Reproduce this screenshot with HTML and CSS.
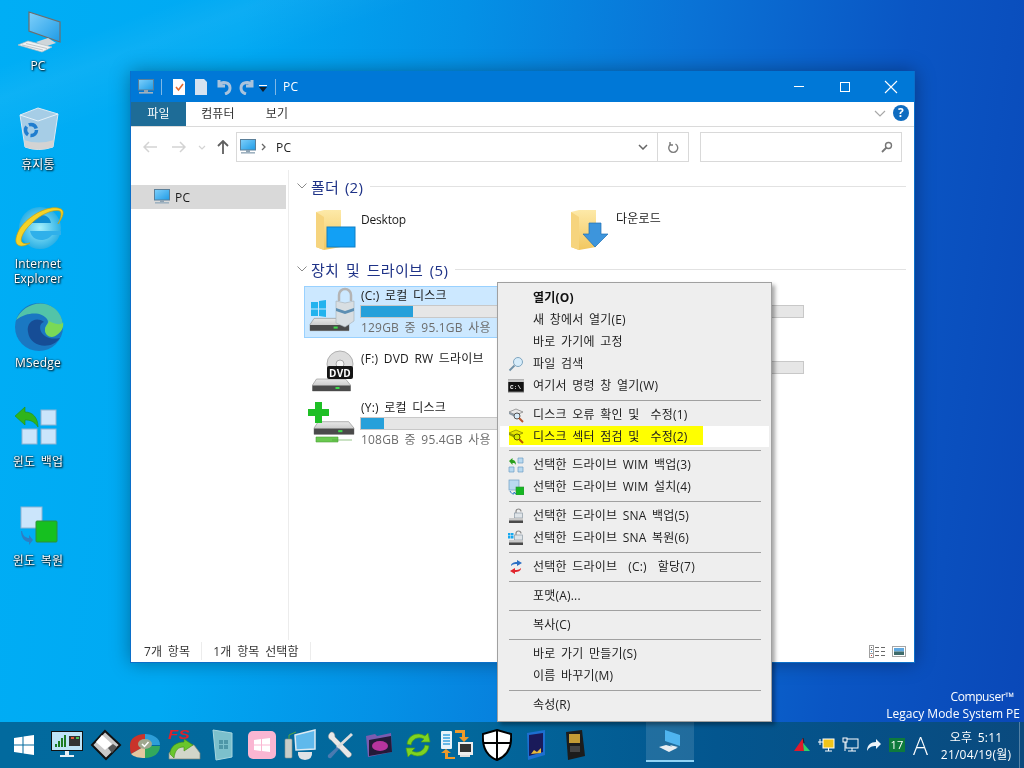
FILE: index.html
```html
<!DOCTYPE html>
<html lang="ko">
<head>
  <meta charset="UTF-8">
  <title>PC</title>
  <link rel="stylesheet" href="styles.css">
</head>
<body>
  <svg class="defs" width="0" height="0">
    <defs>
      <linearGradient id="screen" x1="0" y1="0" x2="1" y2="1">
        <stop offset="0" stop-color="#7fd0fb"/><stop offset="1" stop-color="#1e9be6"/>
      </linearGradient>
      <linearGradient id="folder" x1="0" y1="0" x2="0" y2="1">
        <stop offset="0" stop-color="#fde9a8"/><stop offset="1" stop-color="#f2c75f"/>
      </linearGradient>
      <linearGradient id="diskbody" x1="0" y1="0" x2="0" y2="1">
        <stop offset="0" stop-color="#e8e8e8"/><stop offset="1" stop-color="#b5b5b5"/>
      </linearGradient>
      <radialGradient id="iefill" cx=".5" cy=".5" r=".55">
        <stop offset="0" stop-color="#a5f0fc"/><stop offset="1" stop-color="#1fa9e2"/>
      </radialGradient>
      <symbol id="pc" viewBox="0 0 16 16">
        <rect x="0.5" y="0.5" width="15" height="10.5" fill="url(#screen)" stroke="#5b7f99"/>
        <rect x="6" y="11" width="4" height="2" fill="#8fa3b3"/>
        <rect x="1" y="13" width="14" height="1.6" fill="#9fb2c0"/>
      </symbol>
      <symbol id="drive" viewBox="0 0 40 14">
        <path d="M1 7 5 1H34L39 7V13H1Z" fill="url(#diskbody)" stroke="#8a8a8a" stroke-width=".6"/>
        <rect x="1" y="7.5" width="38" height="5.5" fill="#4a4a4a"/>
        <rect x="24" y="9" width="4" height="2" fill="#3fdc4b"/>
      </symbol>
      <symbol id="checkdisk" viewBox="0 0 16 16">
        <path d="M1 5 8 2 15 5 8 8Z" fill="#e7e7e7" stroke="#7b7b7b" stroke-width=".7"/>
        <path d="M1 5V7L6 9.5 8 8Z" fill="#8d9aa5"/>
        <circle cx="9" cy="9" r="3" fill="#d7ecfa" stroke="#555"/>
        <path d="M11 11 15 15" stroke="#b8562c" stroke-width="2"/>
      </symbol>
      <symbol id="lockdrive" viewBox="0 0 16 16">
        <path d="M8 5V3.5A2.5 2.5 0 0 1 13 3.5" fill="none" stroke="#8c8c8c" stroke-width="1.2"/>
        <rect x="6.5" y="5" width="8" height="5" fill="#dfe4e8" stroke="#8c9aa6" stroke-width=".7"/>
        <path d="M1 10H15V15H1Z" fill="#c8c8c8"/>
        <rect x="1" y="12.5" width="14" height="2.5" fill="#4a4a4a"/>
      </symbol>
    </defs>
  </svg>

  <div class="desktop">
    <div class="ray"></div>

    <div class="dicon dicon-pc">
      <svg width="76" height="50" viewBox="0 0 76 50">
        <path d="M29 4 60 14V34L29 23Z" fill="url(#screen)" stroke="#6d6d6d" stroke-width="1.2"/>
        <path d="M36 34 48 30 56 35 44 39Z" fill="#cfd6da"/>
        <path d="M18 37 28 33 52 39 42 44Z" fill="#eef2f4" stroke="#b5bcc0" stroke-width=".7"/>
        <path d="M22 37 43 42M26 35.500 47 40.500" stroke="#aab2b6" stroke-width=".7"/>
      </svg>
      <span class="dlabel">PC</span>
    </div>
    <div class="dicon dicon-bin">
      <svg width="76" height="46" viewBox="0 0 76 46">
        <path d="M20 8 38 1 58 7 53 40Q38 45 25 40Z" fill="#a6cde6" stroke="#dbeaf4" stroke-width="1"/>
        <path d="M20 8 38 14 58 7" fill="none" stroke="#e4f1f9" stroke-width="1"/>
        <path d="M24 33Q38 38 54 33L53 40Q38 45 25 40Z" fill="#d3d3d3"/>
        <circle cx="31" cy="23" r="5.500" fill="none" stroke="#1f7dcf" stroke-width="3.500" stroke-dasharray="9 2.500"/>
      </svg>
      <span class="dlabel">휴지통</span>
    </div>
    <div class="dicon dicon-ie">
      <svg width="76" height="50" viewBox="0 0 76 50">
        <circle cx="40" cy="25" r="21" fill="url(#iefill)"/>
        <path d="M30 20C31 15 35 12 41 12 47 12 50 15 51 20Z" fill="#0f8fd2"/>
        <path d="M30 28H61V32H52C50 35 45 37 41 37 35 37 31 33 30 28Z" fill="#2fb0ea"/>
        <path d="M61 6C50 1 28 12 19 27 15 35 15 40 18 42 21 44 25 43 30 40 22 42 19 39 23 31 31 17 50 5 60 8 62 10 61 15 58 21 63 14 65 8 61 6Z" fill="#f5d327" stroke="#c99f10" stroke-width=".7"/>
      </svg>
      <span class="dlabel">Internet<br>Explorer</span>
    </div>
    <div class="dicon dicon-edge">
      <svg width="76" height="50" viewBox="0 0 76 50">
        <circle cx="39" cy="25" r="24" fill="#1a78c2"/>
        <path d="M16 18C22 4 40-4 54 6 62 12 66 24 59 31 54 36 45 33 45 28 45 22 50 22 47 17 42 10 28 9 16 18Z" fill="#52c4a8"/>
        <path d="M58 32C52 38 45 34 45 28 45 24 49 22 49 19 54 22 62 24 63 20 64 25 62 29 58 32Z" fill="#7ad957"/>
        <path d="M28 30C26 20 36 14 44 20 36 22 40 40 60 36 52 48 30 46 28 30Z" fill="#164d96"/>
      </svg>
      <span class="dlabel">MSedge</span>
    </div>
    <div class="dicon dicon-backup">
      <svg width="76" height="46" viewBox="0 0 76 46">
        <rect class="pane" x="41" y="7" width="15" height="15"/>
        <rect class="pane" x="22" y="26" width="15" height="15"/>
        <rect class="pane" x="41" y="26" width="15" height="15"/>
        <path d="M15 13 25 4V9C33 9 38 15 38 24 34 18 30 17 25 17V22Z" fill="#2fb41c" stroke="#218f12" stroke-width=".6"/>
      </svg>
      <span class="dlabel">윈도 백업</span>
    </div>
    <div class="dicon dicon-restore">
      <svg width="76" height="44" viewBox="0 0 76 44">
        <rect class="pane" x="21" y="2" width="21" height="21"/>
        <path d="M22 26C23 31 26 33 29 33V30L33 35 29 40V37C25 37 21 33 21 26Z" fill="#2d7ec4"/>
        <rect x="36" y="16" width="21" height="21" rx="1" fill="#16c020" stroke="#2f8f3a"/>
      </svg>
      <span class="dlabel">윈도 복원</span>
    </div>

    <div class="watermark">
      <div class="wm-top">Compuser™</div>
      <div>Legacy Mode System PE</div>
    </div>

    <div class="window">
      <div class="titlebar">
        <svg class="qa-pc" width="16" height="16"><use href="#pc"/></svg>
        <span class="qa-sep"></span>
        <svg class="qa" width="14" height="16" viewBox="0 0 14 16">
          <path d="M1 0H10L13 3V16H1Z" fill="#fdfdfd"/>
          <path d="M4 8 6.500 11 11 5" fill="none" stroke="#e4682b" stroke-width="1.6"/>
        </svg>
        <svg class="qa" width="14" height="16" viewBox="0 0 14 16">
          <path d="M1 0H10L13 3V16H1Z" fill="#d5e2f0"/>
        </svg>
        <svg class="qa" width="16" height="16" viewBox="0 0 16 16">
          <path d="M3 1V7H9M3 6C6 2 14 3 14 9 14 12 12 14 9 15" fill="none" stroke="#a9c3dc" stroke-width="3"/>
        </svg>
        <svg class="qa qa-redo" width="16" height="16" viewBox="0 0 16 16">
          <path d="M13 1V7H7M13 6C10 2 2 3 2 9 2 12 4 14 7 15" fill="none" stroke="#a9c3dc" stroke-width="3"/>
        </svg>
        <svg class="qa-drop" width="8" height="7" viewBox="0 0 8 7">
          <rect y="0" width="8" height="1" fill="#fff"/>
          <path d="M0 2H8L4 7Z" fill="#10202e"/>
        </svg>
        <span class="qa-sep qa-sep2"></span>
        <span class="title-text">PC</span>
        <div class="caption">
          <span class="cap-btn"><span class="cap-min"></span></span>
          <span class="cap-btn"><span class="cap-max"></span></span>
          <span class="cap-btn">
            <svg width="14" height="14" viewBox="0 0 14 14"><path d="M1 1 13 13M13 1 1 13" stroke="#fff" stroke-width="1.100"/></svg>
          </span>
        </div>
      </div>

      <div class="tabs">
        <span class="tab tab-file">파일</span>
        <span class="tab tab-computer">컴퓨터</span>
        <span class="tab">보기</span>
        <svg class="ribbon-chev" width="12" height="7" viewBox="0 0 12 7"><path d="M1 1 6 6 11 1" fill="none" stroke="#a8a8a8" stroke-width="1.200"/></svg>
        <span class="help">?</span>
      </div>

      <div class="navrow">
        <svg class="nav nav-back" width="14" height="12" viewBox="0 0 14 12"><path d="M6 1 1 6 6 11M1 6H14" fill="none" stroke="#d3d3d3" stroke-width="1.500"/></svg>
        <svg class="nav nav-fwd" width="14" height="12" viewBox="0 0 14 12"><path d="M8 1 13 6 8 11M13 6H0" fill="none" stroke="#d3d3d3" stroke-width="1.500"/></svg>
        <svg class="nav nav-down" width="8" height="5" viewBox="0 0 8 5"><path d="M1 1 4 4 7 1" fill="none" stroke="#d3d3d3" stroke-width="1.200"/></svg>
        <svg class="nav nav-up" width="12" height="14" viewBox="0 0 12 14"><path d="M1 6 6 1 11 6M6 1V14" fill="none" stroke="#5f5f5f" stroke-width="1.800"/></svg>
        <div class="addr">
          <svg class="addr-pc" width="16" height="16"><use href="#pc"/></svg>
          <svg class="addr-gt" width="5" height="8" viewBox="0 0 5 8"><path d="M1 1 4 4 1 7" fill="none" stroke="#666" stroke-width="1.300"/></svg>
          <span class="addr-text">PC</span>
          <svg class="addr-chev" width="10" height="6" viewBox="0 0 10 6"><path d="M1 1 5 5 9 1" fill="none" stroke="#666" stroke-width="1.500"/></svg>
          <span class="addr-refresh">
            <svg width="12" height="13" viewBox="0 0 12 13"><path d="M4 3A4.500 4.500 0 1 0 8.500 3M3 1V4H6" fill="none" stroke="#7a7a7a" stroke-width="1.400"/></svg>
          </span>
        </div>
        <div class="search">
          <svg width="12" height="12" viewBox="0 0 12 12"><circle cx="7.500" cy="4.500" r="3" fill="none" stroke="#777" stroke-width="1.400"/><path d="M5.500 6.500 1 11" stroke="#777" stroke-width="1.800"/></svg>
        </div>
      </div>

      <div class="main">
        <div class="navpane">
          <div class="navitem">
            <svg width="16" height="16"><use href="#pc"/></svg>
            <span>PC</span>
          </div>
        </div>
        <div class="content">
          <div class="group">
            <svg class="group-chev" width="10" height="6" viewBox="0 0 10 6"><path d="M.5 .5 5 5 9.500 .5" fill="none" stroke="#8a8a8a"/></svg>
            <span class="group-title">폴더 (2)</span>
            <span class="group-line"></span>
          </div>
          <div class="folders">
            <div class="folder">
              <svg width="41" height="42" viewBox="0 0 41 42">
                <path d="M1 3 9 1 26 1V38L9 41 1 38Z" fill="url(#folder)"/>
                <path d="M1 3 9 8V41L1 38Z" fill="#f6d47e"/>
                <rect x="12" y="18" width="28" height="20" fill="#12a0f5" stroke="#0f7fc5"/>
              </svg>
              <span class="folder-name name-latin">Desktop</span>
            </div>
            <div class="folder">
              <svg width="41" height="42" viewBox="0 0 41 42">
                <path d="M1 3 9 1 26 1V38L9 41 1 38Z" fill="url(#folder)"/>
                <path d="M1 3 9 8V41L1 38Z" fill="#f6d47e"/>
                <path d="M19 14H31V25H38L25 38 13 25H19Z" fill="#3d95dc" stroke="#2170b5" stroke-width=".7"/>
              </svg>
              <span class="folder-name">다운로드</span>
            </div>
          </div>
          <div class="group group-2">
            <svg class="group-chev" width="10" height="6" viewBox="0 0 10 6"><path d="M.5 .5 5 5 9.500 .5" fill="none" stroke="#8a8a8a"/></svg>
            <span class="group-title">장치 및 드라이브 (5)</span>
            <span class="group-line"></span>
          </div>
          <div class="drives">
            <div class="drive drive-selected">
              <svg class="drive-icon" width="50" height="48" viewBox="0 0 50 48">
                <path d="M3 15H10V21.500H3ZM11 14V21.500H18V13ZM3 22.500H10V29H3ZM11 22.500H18V30L11 29Z" fill="#22b3ee"/>
                <use href="#drive" x="1" y="30" width="41" height="15"/>
                <path d="M31 14V8A6 6 0 0 1 43 8V14" fill="none" stroke="#b4b4b4" stroke-width="2.500"/>
                <path d="M28 14 37 16 46 14V34L37 40 28 36Z" fill="#d8dee2" stroke="#a4aeb5" stroke-width=".6"/>
                <path d="M28 21 37 24 46 21V24L37 27 28 24Z" fill="#5d8fb3"/>
              </svg>
              <div class="drive-info">
                <div class="drive-name">(C:) 로컬 디스크</div>
                <div class="bar"><span class="bar-c"></span></div>
                <div class="drive-size">129GB 중 95.1GB 사용 가능</div>
              </div>
            </div>
            <div class="drive drive-ghost"><div class="drive-info"><div class="drive-name"></div><div class="bar"></div></div></div>
            <div class="drive">
              <svg class="drive-icon" width="50" height="48" viewBox="0 0 50 48">
                <circle cx="32" cy="14" r="13" fill="#dcdcdc" stroke="#b0b0b0"/>
                <circle cx="32" cy="14" r="4" fill="#f4f4f4" stroke="#a5a5a5"/>
                <use href="#drive" x="3" y="28" width="41" height="14"/>
                <rect x="19" y="16" width="26" height="13" rx="2" fill="#141414"/>
                <text class="dvd" x="32" y="26.500" text-anchor="middle">DVD</text>
              </svg>
              <div class="drive-info">
                <div class="drive-name">(F:) DVD RW 드라이브</div>
              </div>
            </div>
            <div class="drive drive-ghost ghost-2"><div class="drive-info"><div class="drive-name"></div><div class="bar"></div></div></div>
            <div class="drive drive-y">
              <svg class="drive-icon" width="50" height="48" viewBox="0 0 50 48">
                <use href="#drive" x="5" y="20" width="42" height="18"/>
                <path d="M8 38H30V43H8ZM24 41H44" fill="#69c94f" stroke="#4f9d3b" stroke-width=".6"/>
                <path d="M7 3H14V10H21V17H14V24H7V17H0V10H7Z" fill="#1fbf26"/>
              </svg>
              <div class="drive-info">
                <div class="drive-name">(Y:) 로컬 디스크</div>
                <div class="bar"><span class="bar-y"></span></div>
                <div class="drive-size">108GB 중 95.4GB 사용 가능</div>
              </div>
            </div>
          </div>
        </div>
      </div>

      <div class="statusbar">
        <span class="st-item">7개 항목</span>
        <span class="st-item">1개 항목 선택함</span>
        <span class="st-views">
          <svg width="16" height="13" viewBox="0 0 16 13">
            <rect x=".5" y=".5" width="4" height="12" fill="#fff" stroke="#a0a0a0"/>
            <path d="M.5 4.500H4.500M.5 8.500H4.500" stroke="#a0a0a0"/>
            <rect x="2" y="2" width="1" height="1" fill="#666"/>
            <rect x="2" y="6" width="1" height="1" fill="#3d8fd0"/>
            <rect x="2" y="10" width="1" height="1" fill="#c8372d"/>
            <path d="M6 2.500H10M12 2.500H16M6 6.500H10M12 6.500H16M6 10.500H10M12 10.500H16" stroke="#6a6a6a"/>
          </svg>
          <svg width="14" height="11" viewBox="0 0 14 11">
            <rect x=".5" y=".5" width="13" height="10" fill="#fff" stroke="#a5a5a5"/>
            <rect x="2" y="2" width="10" height="3.500" fill="#5fa8e0"/>
            <rect x="2" y="5.500" width="10" height="3.500" fill="#3f6b6a"/>
          </svg>
        </span>
      </div>
    </div>

    <div class="menu">
      <div class="mi mi-bold">열기(O)</div>
      <div class="mi">새 창에서 열기(E)</div>
      <div class="mi">바로 가기에 고정</div>
      <div class="mi">
        <svg class="mi-icon" width="16" height="16" viewBox="0 0 16 16"><circle cx="10" cy="6" r="4.500" fill="#d6ecfa" stroke="#7fa5c0"/><path d="M6.500 9.500 1.500 14.500" stroke="#6f90a8" stroke-width="1.800"/></svg>
        파일 검색
      </div>
      <div class="mi">
        <svg class="mi-icon" width="16" height="16" viewBox="0 0 16 16"><rect x="0" y="2" width="16" height="12" fill="#111" stroke="#777"/><rect y="2" width="16" height="2" fill="#c4c4c4"/><text class="cmd" x="2" y="11">C:\</text></svg>
        여기서 명령 창 열기(W)
      </div>
      <div class="msep"></div>
      <div class="mi">
        <svg class="mi-icon" width="16" height="16"><use href="#checkdisk"/></svg>
        디스크 오류 확인 및 &nbsp;수정(1)
      </div>
      <div class="mi mi-hot">
        <span class="hot-yellow">
          <svg class="mi-icon" width="16" height="16"><use href="#checkdisk"/></svg>
          디스크 섹터 점검 및 &nbsp;수정(2)
        </span>
      </div>
      <div class="msep"></div>
      <div class="mi">
        <svg class="mi-icon" width="16" height="16" viewBox="0 0 16 16"><path d="M10 1H15V6H10ZM1 10H6V15H1ZM10 10H15V15H10Z" fill="#b9d9f0" stroke="#6f9ec4" stroke-width=".7"/><path d="M1 4 4.500 1V3C7 3 8 5 8 8 7 6 6 6 4.500 6V8Z" fill="#2aa01c"/></svg>
        선택한 드라이브 WIM 백업(3)
      </div>
      <div class="mi">
        <svg class="mi-icon" width="16" height="16" viewBox="0 0 16 16"><rect x="1" y="1" width="10" height="10" fill="#b9d9f0" stroke="#6f9ec4" stroke-width=".7"/><rect x="8" y="8" width="8" height="8" fill="#16b722" stroke="#2f8f3a" stroke-width=".6"/><path d="M2 12C3 14 4 15 6 15V13L8 15" fill="none" stroke="#2d7ec4"/></svg>
        선택한 드라이브 WIM 설치(4)
      </div>
      <div class="msep"></div>
      <div class="mi">
        <svg class="mi-icon" width="16" height="16"><use href="#lockdrive"/></svg>
        선택한 드라이브 SNA 백업(5)
      </div>
      <div class="mi">
        <svg class="mi-icon" width="16" height="16" viewBox="0 0 16 16"><use href="#lockdrive"/><path d="M0 3H2.500V5.500H0ZM3 3H5.500V5.500H3ZM0 6H2.500V8.500H0ZM3 6H5.500V8.500H3Z" fill="#16a8f0"/></svg>
        선택한 드라이브 SNA 복원(6)
      </div>
      <div class="msep"></div>
      <div class="mi">
        <svg class="mi-icon" width="16" height="16" viewBox="0 0 16 16"><path d="M3 7C3 4 6 3 9 3V1L14 4 9 7V5C7 5 5 5 3 7Z" fill="#2b6fc4"/><path d="M13 9C13 12 10 13 7 13V15L2 12 7 9V11C9 11 11 11 13 9Z" fill="#e0252c"/></svg>
        선택한 드라이브 &nbsp;(C:) &nbsp;할당(7)
      </div>
      <div class="msep"></div>
      <div class="mi">포맷(A)...</div>
      <div class="msep"></div>
      <div class="mi">복사(C)</div>
      <div class="msep"></div>
      <div class="mi">바로 가기 만들기(S)</div>
      <div class="mi">이름 바꾸기(M)</div>
      <div class="msep"></div>
      <div class="mi">속성(R)</div>
    </div>
  </div>

  <div class="taskbar">
    <span class="start">
      <svg width="20" height="20" viewBox="0 0 20 20"><path d="M0 3 8.500 1.800V9.500H0ZM9.500 1.600 20 0V9.500H9.500ZM0 10.500H8.500V18.200L0 17ZM9.500 10.500H20V20L9.500 18.400Z" fill="#fff"/></svg>
    </span>
    <span class="tb">
      <svg width="32" height="28" viewBox="0 0 32 28">
        <rect x=".5" y=".5" width="31" height="19" fill="#bfe3f7" stroke="#111"/>
        <path d="M4 16H6V13H4ZM7 16H9V10H7ZM10 16H12V7H10ZM13 16H15V4H13Z" fill="#1c7a22"/>
        <rect x="18" y="5" width="11" height="10" fill="#333"/>
        <rect x="20" y="6" width="3" height="2" fill="#e25c3a"/><rect x="25" y="6" width="3" height="2" fill="#4fc14f"/>
        <path d="M14 20H18V24H14ZM9 24H23V26H9Z" fill="#e8f1f6"/>
      </svg>
    </span>
    <span class="tb">
      <svg width="32" height="32" viewBox="0 0 32 32">
        <path d="M15 2 30 16 16 30 2 16Z" fill="#c9c9c9" stroke="#111" stroke-width="2"/>
        <path d="M12 6 22 15 15 21 6 13Z" fill="#fff"/>
        <path d="M18 19 23 15 27 18 22 24Z" fill="#555"/>
      </svg>
    </span>
    <span class="tb">
      <svg width="32" height="30" viewBox="0 0 32 30">
        <path d="M1 15C1 8 8 4 16 4V16L2 24C1 21 1 18 1 15Z" fill="#c9332a"/>
        <path d="M16 4C24 4 31 8 31 15H16Z" fill="#2d9ed8"/>
        <path d="M16 16H31C31 23 25 28 16 28Z" fill="#33a85c"/>
        <path d="M2 24C5 27 10 28 16 28V16Z" fill="#e6c7a0"/>
        <ellipse cx="16" cy="14" rx="7" ry="5" fill="#9fa88f"/>
        <path d="M13 14 15.500 16.500 19.500 12" fill="none" stroke="#fff" stroke-width="1.500"/>
      </svg>
    </span>
    <span class="tb">
      <svg width="34" height="32" viewBox="0 0 34 32">
        <text class="fs" x="1" y="10" textLength="22" lengthAdjust="spacingAndGlyphs">FS</text>
        <path d="M2 24 10 16H27L33 24V30H2Z" fill="#d2d6ca" stroke="#7f8578" stroke-width=".7"/>
        <path d="M3 25C3 17 10 13 17 13V10L26 16 17 22V18C11 18 8 21 7 29Z" fill="#69c62d" stroke="#3d8a15" stroke-width=".6"/>
      </svg>
    </span>
    <span class="tb">
      <svg width="22" height="32" viewBox="0 0 22 32">
        <path d="M1 1 20 4V28L4 31Z" fill="#7cc0cc" stroke="#a6d7e0"/>
        <path d="M7 11H11V15H7ZM12 11H16V15H12ZM7 16H11V20H7ZM12 16H16V20H12Z" fill="#4e97a8"/>
      </svg>
    </span>
    <span class="tb">
      <svg width="28" height="28" viewBox="0 0 28 28">
        <rect width="28" height="28" rx="5" fill="#fab6d2"/>
        <path d="M6 9 13 8V13.500H6ZM14 8 22 7V13.500H14ZM6 14.500H13V20L6 19ZM14 14.500H22V21L14 20Z" fill="#fff"/>
      </svg>
    </span>
    <span class="tb">
      <svg width="34" height="32" viewBox="0 0 34 32">
        <rect x="1" y="10" width="7" height="19" rx="1" fill="#c8cdc8" stroke="#8d948d" stroke-width=".6"/>
        <path d="M5 10V6L12 3" fill="none" stroke="#57a43c"/>
        <path d="M11 6 31 1V20L12 21Z" fill="#5fb9ec" stroke="#dceaf3" stroke-width="1.500"/>
        <path d="M14 23H28Q29 30 21 31 13 30 14 23Z" fill="#dfe3e6"/>
      </svg>
    </span>
    <span class="tb">
      <svg width="30" height="30" viewBox="0 0 30 30">
        <path d="M6 2C2 5 3 9 6 10L22 27C24 29 28 25 26 23L10 7C10 4 9 2 6 2Z" fill="#e8e8e8" stroke="#888" stroke-width=".5"/>
        <path d="M26 3 28 5 13 19 11 17Z" fill="#dcdcdc"/>
        <path d="M12 17 14 19 6 28C4 29 2 27 3 25Z" fill="#4a7ab0"/>
      </svg>
    </span>
    <span class="tb">
      <svg width="28" height="26" viewBox="0 0 28 26">
        <path d="M1 4 10 2 12 4 26 1 27 20 3 25Z" fill="#7a5cb0"/>
        <path d="M4 8 26 4 27 20 4 24Z" fill="#241a38"/>
        <ellipse cx="15" cy="14" rx="8" ry="5" fill="#d239b0" opacity=".85"/>
      </svg>
    </span>
    <span class="tb">
      <svg width="30" height="30" viewBox="0 0 30 30">
        <path d="M4 14C5 6 13 1 22 6L25 3 27 12 18 12 21 9C15 6 9 9 8 15Z" fill="#7ed321" stroke="#4f9d16" stroke-width=".7"/>
        <path d="M26 16C25 24 17 29 8 24L5 27 3 18H12L9 21C15 24 21 21 22 15Z" fill="#7ed321" stroke="#4f9d16" stroke-width=".7"/>
      </svg>
    </span>
    <span class="tb">
      <svg width="34" height="32" viewBox="0 0 34 32">
        <rect x="1" y="2" width="11" height="18" rx="1" fill="#e8f3fa"/>
        <path d="M3 6H10M3 9H10M3 12H10M3 15H10" stroke="#39a4e0" stroke-width="1.500"/>
        <path d="M15 1H25V8H29L24 13 19 8 22 8V4H15Z" fill="#f09a2a"/>
        <rect x="18" y="13" width="15" height="13" fill="#eee"/>
        <rect x="20" y="15" width="11" height="8" fill="#333"/>
        <path d="M20 26H30V28H20Z" fill="#ddd"/>
        <path d="M15 30H5V24H1L6 20 11 24H8V28H15Z" fill="#f09a2a"/>
      </svg>
    </span>
    <span class="tb">
      <svg width="30" height="32" viewBox="0 0 30 32">
        <path d="M15 1 29 5C30 18 25 27 15 31 5 27 0 18 1 5Z" fill="#fff" stroke="#000" stroke-width="2"/>
        <path d="M15 1V31M1 14H29" stroke="#000" stroke-width="2"/>
      </svg>
    </span>
    <span class="tb">
      <svg width="20" height="32" viewBox="0 0 20 32">
        <path d="M1 4 19 1V26L2 31Z" fill="#1d6fd1"/>
        <path d="M3 6 17 4V23L3 27Z" fill="#1a1a5a"/>
        <path d="M5 25 8 21 11 23 15 19V24Z" fill="#e6b93a"/>
      </svg>
    </span>
    <span class="tb">
      <svg width="20" height="32" viewBox="0 0 20 32">
        <path d="M1 3 17 1 20 27 3 31Z" fill="#1c1c1c"/>
        <rect x="4" y="5" width="11" height="9" fill="#c39b35"/>
        <rect x="5" y="17" width="10" height="6" fill="#444"/>
      </svg>
    </span>
    <span class="tb-active">
      <svg width="24" height="24" viewBox="0 0 24 24">
        <path d="M7 1 22 6V17L7 12Z" fill="#4fb4ef"/>
        <path d="M12 16 20 18 16 20Z" fill="#e6eef3"/>
        <path d="M1 18 8 16 19 19 11 23Z" fill="#e9eef2"/>
      </svg>
    </span>
    <div class="tray">
      <svg width="18" height="14" viewBox="0 0 18 14"><path d="M10 0 1 13H11Z" fill="#e0192b"/><path d="M10 5 17 13H11Z" fill="#2fd06a"/><path d="M10 0 11 5" stroke="#222"/></svg>
      <svg width="17" height="16" viewBox="0 0 17 16"><rect x="5" y="2" width="11" height="9" fill="#f0c419" stroke="#fff"/><path d="M7 14H14M10.500 11V14M0 5H5M2 2V8" stroke="#fff"/></svg>
      <svg width="17" height="16" viewBox="0 0 17 16"><rect x="4" y="2" width="12" height="9" fill="none" stroke="#fff"/><rect x="1" y="1" width="4" height="4" fill="#114d7d" stroke="#fff"/><path d="M6 14H14M10 11V14M3 5V14" stroke="#fff"/></svg>
      <svg width="16" height="14" viewBox="0 0 16 14"><path d="M1 13C1 7 5 4 10 4V1L15 6 10 11V8C6 8 3 9 1 13Z" fill="#eef4f9"/></svg>
      <span class="tray-17">17</span>
      <span class="tray-a">A</span>
      <div class="clock">
        <div>오후 5:11</div>
        <div>21/04/19(월)</div>
      </div>
      <span class="show-desktop"></span>
    </div>
  </div>
</body>
</html>
```
FILE: styles.css
```css
* {
  box-sizing: border-box;
}
html, body {
  margin: 0;
  padding: 0;
}
body {
  width: 1024px;
  height: 768px;
  overflow: hidden;
  display: flex;
  flex-direction: column;
  font-family: "Open Sans", "Noto Sans CJK KR", sans-serif;
  font-size: 12px;
  letter-spacing: 0.2px;
  word-spacing: 2.2px;
  color: #1a1a1a;
}
.defs {
  position: absolute;
}
svg {
  display: block;
  flex: none;
}

/* desktop */
.desktop {
  position: relative;
  flex: 1;
  background: linear-gradient(97deg, #00aef5 0, #00a9f3 22%, #0491e6 42%, #0a73d6 62%, #0a56c4 82%, #0a48b8 100%);
}
.ray {
  position: absolute;
  left: 0;
  top: 0;
  right: 0;
  bottom: 0;
  background: linear-gradient(160deg, rgba(255,255,255,0) 6%, rgba(255,255,255,0.05) 9%, rgba(255,255,255,0) 14%);
}
.dicon {
  position: absolute;
  left: 0;
  width: 76px;
  text-align: center;
}
.dicon-pc { top: 8px; }
.dicon-bin { top: 107px; }
.dicon-ie { top: 203px; }
.dicon-edge { top: 302px; }
.dicon-backup { top: 403px; }
.dicon-restore { top: 505px; }
.dlabel {
  display: block;
  line-height: 15px;
  color: #fff;
  text-shadow: 1px 1px 2px #000, 0 0 2px rgba(0,0,0,0.8);
}
.dicon-bin .dlabel { margin-top: 4px; }
.dicon-ie .dlabel { margin-top: 3px; }
.dicon-edge .dlabel { margin-top: 3px; }
.dicon-backup .dlabel { margin-top: 5px; }
.dicon-restore .dlabel { margin-top: 4px; }
.pane {
  fill: #cbe5fb;
  stroke: #8fb4d3;
  stroke-width: 1;
}
.watermark {
  position: absolute;
  right: 4px;
  bottom: 0;
  color: #fff;
  text-align: right;
  line-height: 17px;
  letter-spacing: 0;
  word-spacing: 0;
}
.wm-top {
  padding-right: 6px;
  letter-spacing: -0.4px;
}

/* explorer window */
.window {
  position: absolute;
  left: 130px;
  top: 71px;
  width: 785px;
  height: 592px;
  display: flex;
  flex-direction: column;
  background: #fff;
  border: 1px solid #0b6fc9;
  border-top: 0;
  box-shadow: 0 0 18px rgba(0,0,0,0.35);
}
.titlebar {
  display: flex;
  align-items: center;
  height: 31px;
  padding-left: 7px;
  background: #0078d7;
  color: #fff;
}
.qa-sep {
  width: 1px;
  height: 16px;
  margin-left: 7px;
  background: #7fb8e6;
}
.qa {
  margin-left: 10px;
}
.qa + .qa {
  margin-left: 8px;
}
.qa + .qa-redo {
  margin-left: 7px;
}
.qa-drop {
  margin-left: 4px;
  margin-top: 4px;
}
.qa-sep2 {
  margin-left: 8px;
}
.title-text {
  margin-left: 7px;
}
.caption {
  display: flex;
  margin-left: auto;
}
.cap-btn {
  display: flex;
  align-items: center;
  justify-content: center;
  width: 46px;
  height: 31px;
}
.cap-min {
  width: 10px;
  height: 1px;
  background: #fff;
}
.cap-max {
  width: 10px;
  height: 10px;
  border: 1px solid #fff;
}
.tabs {
  display: flex;
  align-items: stretch;
  height: 25px;
  background: #fff;
  border-bottom: 1px solid #dadada;
}
.tab {
  display: flex;
  align-items: center;
  justify-content: center;
  width: 54px;
  padding-bottom: 2px;
  color: #333;
}
.tab-file {
  width: 55px;
  background: #1e6c97;
  color: #fff;
}
.tab-computer {
  width: 64px;
}
.ribbon-chev {
  margin: 8px 0 0 auto;
}
.help {
  width: 16px;
  height: 16px;
  margin: 3px 5px 0 7px;
  border-radius: 50%;
  background: #0f6cc0;
  color: #fff;
  font-weight: 700;
  font-size: 12px;
  line-height: 16px;
  text-align: center;
}
.navrow {
  display: flex;
  align-items: center;
  height: 43px;
  padding-bottom: 3px;
  background: #fff;
}
.nav-back { margin-left: 12px; }
.nav-fwd { margin-left: 15px; }
.nav-down { margin-left: 12px; }
.nav-up { margin-left: 11px; }
.addr, .search {
  display: flex;
  align-items: center;
  height: 30px;
  border: 1px solid #d9d9d9;
}
.addr {
  width: 453px;
  margin-left: 7px;
  padding-left: 3px;
}
.addr-gt { margin-left: 5px; }
.addr-text {
  margin-left: 10px;
  color: #222;
}
.addr-chev {
  margin-left: auto;
  margin-right: 9px;
}
.addr-refresh {
  display: flex;
  align-items: center;
  justify-content: center;
  width: 31px;
  height: 28px;
  border-left: 1px solid #d9d9d9;
}
.search {
  width: 202px;
  margin-left: 11px;
  justify-content: flex-end;
  padding-right: 8px;
}
.main {
  flex: 1;
  display: flex;
  min-height: 0;
}
.navpane {
  width: 158px;
  padding-top: 15px;
  padding-right: 2px;
  border-right: 1px solid #ececec;
}
.navitem {
  display: flex;
  align-items: center;
  gap: 5px;
  height: 24px;
  padding-left: 23px;
  background: #d9d9d9;
}
.content {
  flex: 1;
  padding: 6px 8px 0 8px;
  overflow: hidden;
}
.group {
  display: flex;
  align-items: center;
  height: 20px;
}
.group-chev {
  margin-right: 4px;
}
.group-title {
  font-size: 15px;
  color: #1e3287;
  letter-spacing: 0.3px;
  word-spacing: 1.5px;
}
.group-2 .group-title {
  word-spacing: 2.5px;
}
.group-line {
  flex: 1;
  height: 1px;
  margin-left: 7px;
  background: #e2e2e2;
}
.folders {
  display: flex;
  height: 63px;
  padding-left: 18px;
  padding-top: 13px;
}
.folder {
  display: flex;
  width: 255px;
  gap: 5px;
}
.folder-name {
  line-height: 20px;
}
.name-latin {
  letter-spacing: -0.2px;
  line-height: 21px;
}
.drives {
  display: grid;
  grid-template-columns: 255px 255px;
  grid-template-rows: 63px 49px 52px;
  margin-top: 7px;
  margin-left: 7px;
}
.drive {
  display: flex;
  width: 253px;
  height: 52px;
  padding-left: 3px;
  border: 1px solid transparent;
}
.drive-selected {
  background: #cce8ff;
  border-color: #99d1ff;
}
.drive-ghost {
  padding-left: 52px;
}
.ghost-2 {
  margin-top: -7px;
}
.drive-info {
  flex: 1;
  padding-left: 2px;
}
.drive-name {
  height: 16px;
  line-height: 16px;
  margin-top: 1px;
  margin-bottom: 1px;
  margin-left: 1px;
  white-space: nowrap;
}
.bar {
  width: 190px;
  height: 13px;
  background: #e6e6e6;
  border: 1px solid #c8c8c8;
}
.bar span {
  display: block;
  height: 100%;
  background: #26a0da;
}
.bar-c { width: 52px; }
.bar-y { width: 23px; }
.drive-size {
  margin-left: 1px;
  line-height: 20px;
  color: #6d6d6d;
  white-space: nowrap;
}
.dvd {
  font: 700 10px "Open Sans", sans-serif;
  fill: #fff;
}
.cmd {
  font: 700 6px "Liberation Mono", monospace;
  fill: #fff;
}
.fs {
  font: italic 700 12px "Liberation Sans", sans-serif;
  fill: #e0202a;
}
.statusbar {
  display: flex;
  align-items: center;
  height: 22px;
  padding-left: 13px;
  color: #333;
}
.st-item {
  padding-right: 11px;
  margin-right: 11px;
  border-right: 1px solid #ececec;
}
.st-views {
  display: flex;
  align-items: center;
  gap: 7px;
  margin-left: auto;
  margin-right: 8px;
}

/* context menu */
.menu {
  position: absolute;
  left: 497px;
  top: 282px;
  width: 275px;
  height: 440px;
  padding: 4px 2px;
  background: #eeeeee;
  border: 1px solid #a0a0a0;
  box-shadow: 3px 3px 4px rgba(0,0,0,0.35);
}
.mi {
  position: relative;
  height: 22px;
  padding-left: 33px;
  line-height: 22px;
  white-space: nowrap;
  color: #222;
}
.mi-bold {
  font-weight: 700;
  color: #111;
}
.mi-icon {
  position: absolute;
  left: 8px;
  top: 3px;
}
.msep {
  height: 1px;
  margin: 3px 8px 3px 9px;
  background: #a0a0a0;
}
.mi-hot {
  height: 21px;
  margin-bottom: 1px;
  padding-left: 9px;
  background: #fff;
}
.hot-yellow {
  display: block;
  width: 194px;
  height: 19px;
  padding-left: 24px;
  line-height: 22px;
  background: #ffff00;
}
.hot-yellow .mi-icon {
  top: 2px;
  mix-blend-mode: multiply;
}

/* taskbar */
.taskbar {
  display: flex;
  align-items: center;
  height: 46px;
  background: linear-gradient(90deg, #026a9e 0, #02689c 45%, #03568f 70%, #0a4a7e 100%);
}
.start {
  display: flex;
  justify-content: center;
  width: 47px;
}
.tb {
  display: flex;
  align-items: center;
  justify-content: center;
  width: 39.100px;
}
.tb-active {
  display: flex;
  align-items: center;
  justify-content: center;
  align-self: flex-start;
  width: 48px;
  height: 40px;
  margin-left: 52px;
  background: rgba(255,255,255,0.12);
  border-bottom: 2px solid #8fd3f5;
}
.tray {
  display: flex;
  align-items: center;
  margin-left: auto;
  color: #fff;
  gap: 7px;
}
.tray-17 {
  width: 16px;
  height: 14px;
  background: #0e7a3c;
  font-size: 11px;
  line-height: 14px;
  text-align: center;
}
.tray-a {
  width: 17px;
  font-size: 25px;
  font-weight: 300;
  letter-spacing: 0;
  text-align: center;
}
.clock {
  width: 80px;
  padding-top: 1px;
  text-align: center;
  line-height: 17px;
}
.show-desktop {
  width: 1px;
  height: 46px;
  margin-left: -4px;
  margin-right: 4px;
  background: rgba(255,255,255,0.3);
}
```
